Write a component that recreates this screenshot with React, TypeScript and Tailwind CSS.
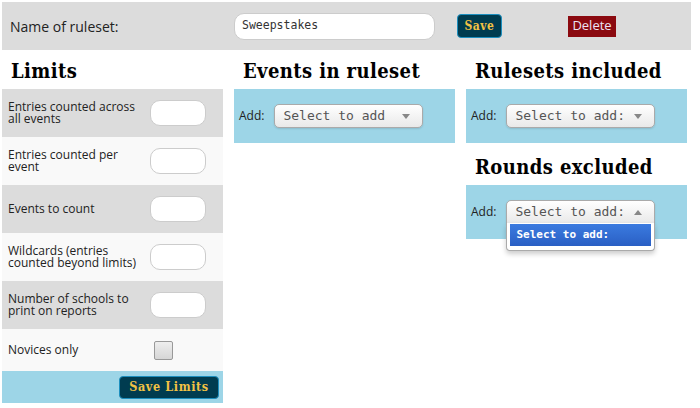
const slab = "font-['DejaVu_Serif_Condensed','DejaVu_Serif',serif] font-bold";
const mono = "font-['DejaVu_Sans_Mono',monospace]";

interface LimitRow {
  label: string;
  kind: "text" | "check";
  height: string;
}

const limitRows: LimitRow[] = [
  { label: "Entries counted across all events", kind: "text", height: "h-[48px]" },
  { label: "Entries counted per event", kind: "text", height: "h-[48px]" },
  { label: "Events to count", kind: "text", height: "h-[48px]" },
  { label: "Wildcards (entries counted beyond limits)", kind: "text", height: "h-[48px]" },
  { label: "Number of schools to print on reports", kind: "text", height: "h-[48px]" },
  { label: "Novices only", kind: "check", height: "h-[42px]" }
];

function Arrow({ up }: { up?: boolean }) {
  return (
    <svg width="8" height="5" viewBox="0 0 8 5" className="shrink-0">
      {up ? <path d="M0 5 L4 0 L8 5 Z" fill="#888" /> : <path d="M0 0 L8 0 L4 5 Z" fill="#888" />}
    </svg>
  );
}

function SelectBox({ text, open }: { text: string; open?: boolean }) {
  return (
    <div className="relative">
      <div
        className={`flex h-[24px] w-[149px] items-center justify-between border border-[#aaa] bg-gradient-to-b from-white to-[#e9e9e9] pl-[8px] pr-[12px] text-[13px] text-[#555] shadow-[0_1px_2px_rgba(0,0,0,0.12)] ${mono} ${
          open ? "rounded-t-[5px]" : "rounded-[5px]"
        }`}
      >
        <span>{text}</span>
        <Arrow up={open} />
      </div>
      {open && (
        <div className="absolute left-0 top-[23px] z-10 w-[149px] rounded-b-[4px] border border-t-0 border-[#aaa] bg-white px-[3px] pb-[4px] pt-[1px] shadow-[0_3px_5px_rgba(0,0,0,0.2)]">
          <div className={`flex h-[22px] items-center bg-gradient-to-b from-[#3b7be0] to-[#2a5fc4] pl-[6px] text-[11px] font-bold text-white ${mono}`}>
            Select to add:
          </div>
        </div>
      )}
    </div>
  );
}

function AddBar({ text, open }: { text: string; open?: boolean }) {
  return (
    <div className="flex h-[54px] items-center gap-[10px] bg-[#9dd5e7] pl-[5px] text-[12px] text-[#222] font-['Open_Sans',sans-serif]">
      <span>Add:</span>
      <SelectBox text={text} open={open} />
    </div>
  );
}

function Heading({ children }: { children: string }) {
  return (
    <h2 className={`flex h-[39px] items-center pl-[9px] pt-[3px] text-[20px] text-black tracking-[0.4px] ${slab}`}>
      {children}
    </h2>
  );
}

export default function App() {
  return (
    <div className="h-[408px] w-[700px] bg-white pt-[2px] font-['Open_Sans',sans-serif] text-[#222]">
      <div className="ml-[2px] flex h-[48px] w-[689px] items-center bg-[#dcdcdc]">
        <span className="w-[232px] pl-[8px] text-[14px] text-[#222]">Name of ruleset:</span>
        <div className={`flex h-[27px] w-[201px] items-center rounded-[10px] border border-[#ccc] bg-white pl-[7px] text-[11.5px] text-[#333] ${mono}`}>
          Sweepstakes
        </div>
        <button
          type="button"
          className={`ml-[22px] h-[24px] w-[45px] rounded-[4px] border border-[#1c8fbf] bg-[#003c50] text-[12px] tracking-[0.5px] text-[#f2c244] ${slab}`}
        >
          Save
        </button>
        <button
          type="button"
          className="ml-[66px] h-[21px] w-[48px] bg-[#8b0a10] text-[13px] text-[#ece4f4]"
        >
          Delete
        </button>
      </div>

      <div className="flex gap-[11px] pl-[2px]">
        <section className="w-[221px]">
          <Heading>Limits</Heading>
          {limitRows.map((row, i) => (
            <div
              key={row.label}
              className={`flex items-center ${row.height} ${i % 2 === 0 ? "bg-[#dcdcdc]" : "bg-[#f9f9f9]"}`}
            >
              <span className="w-[148px] pl-[6px] pr-[4px] text-[12px] leading-[12px] text-[#222]">{row.label}</span>
              {row.kind === "text" ? (
                <div className="h-[26px] w-[56px] rounded-[10px] border border-[#ccc] bg-white" />
              ) : (
                <div className="ml-[4px] h-[19px] w-[19px] rounded-[2px] border border-[#999] bg-gradient-to-b from-[#eee] to-[#d6d6d6]" />
              )}
            </div>
          ))}
          <div className="flex h-[32px] items-center justify-end bg-[#9dd5e7] pr-[4px]">
            <button
              type="button"
              className={`h-[23px] w-[100px] rounded-[4px] border border-[#1c8fbf] bg-[#003c50] text-[12.5px] tracking-[0.6px] text-[#f2c244] ${slab}`}
            >
              Save Limits
            </button>
          </div>
        </section>

        <section className="w-[221px]">
          <Heading>Events in ruleset</Heading>
          <AddBar text="Select to add" />
        </section>

        <section className="w-[221px]">
          <Heading>Rulesets included</Heading>
          <AddBar text="Select to add:" />
          <div className="h-[3px]" />
          <Heading>Rounds excluded</Heading>
          <AddBar text="Select to add:" open />
        </section>
      </div>
    </div>
  );
}
